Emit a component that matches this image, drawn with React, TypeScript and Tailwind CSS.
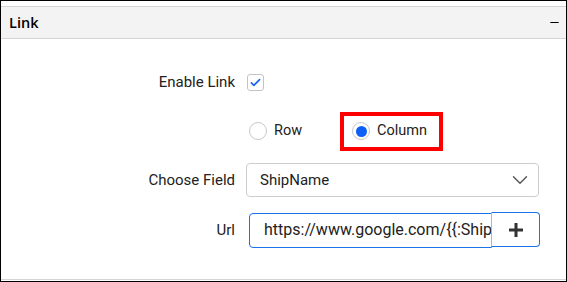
import { ChevronDown, Minus } from "lucide-react";

const Label = ({ children }: { children: string }) => (
  <div className="w-[234px] shrink-0 text-right text-[15px] text-[#222]">{children}</div>
);

const Radio = ({ label, checked }: { label: string; checked?: boolean }) => (
  <label className="flex items-center gap-[7px] text-[14.5px] text-[#222]">
    <span className="flex h-[18px] w-[18px] items-center justify-center rounded-full border border-[#c8c8c8] bg-white">
      {checked && <span className="h-[11px] w-[11px] rounded-full bg-[#0d5ff5]" />}
    </span>
    {label}
  </label>
);

export default function App() {
  return (
    <div className="flex h-[282px] w-[567px] flex-col border border-black bg-white pt-[5px] font-['Roboto',sans-serif]">
      <div className="flex flex-1 flex-col border-y border-[#d4d4d4]">
        <div className="flex h-[32px] items-center justify-between border-b border-[#d4d4d4] bg-[#f3f3f3] pl-[8px] pr-[5px]">
          <span className="font-['Open_Sans',sans-serif] text-[14.5px] font-semibold text-black">Link</span>
          <Minus className="h-[13px] w-[13px] text-black" strokeWidth={2} />
        </div>

        <div className="flex flex-col gap-[15px] pt-[26px]">
          <div className="flex h-[34px] items-center gap-[12px]">
            <Label>Enable Link</Label>
            <span className="flex h-[17px] w-[17px] items-center justify-center rounded-[3px] border border-[#c4c4c4] bg-white">
              <svg viewBox="0 0 16 16" className="h-[13px] w-[13px]" fill="none" stroke="#1662f5" strokeWidth={2} strokeLinecap="round" strokeLinejoin="round">
                <path d="M3 8.5l3 3 7-7" />
              </svg>
            </span>
          </div>

          <div className="flex h-[34px] items-center">
            <div className="w-[235px] shrink-0" />
            <div className="ml-[13px]">
              <Radio label="Row" />
            </div>
            <div className="ml-[38px] flex h-[39px] w-[103px] items-center border-4 border-[#ff0000] pl-[8px]">
              <Radio label="Column" checked />
            </div>
          </div>

          <div className="flex h-[34px] items-center gap-[11px]">
            <Label>Choose Field</Label>
            <div className="flex h-[34px] w-[293px] items-center justify-between rounded-[4px] border border-[#cdcdcd] px-[13px] text-[15px] text-[#222]">
              <span>ShipName</span>
              <ChevronDown className="-mr-[8px] h-[26px] w-[26px] text-[#555]" strokeWidth={1.3} />
            </div>
          </div>

          <div className="flex h-[36px] items-center gap-[14px]">
            <Label>Url</Label>
            <div className="flex items-center">
              <div className="flex h-[35px] w-[243px] items-center overflow-hidden whitespace-nowrap rounded-l-[4px] border border-[#1a73e8] pl-[14px] text-[16px] text-[#222]">
                https://www.google.com/{"{{"}:ShipName{"}}"}
              </div>
              <button className="-ml-[1px] -mt-[1px] flex h-[35px] w-[49px] items-center justify-center rounded-r-[4px] border border-[#1a73e8] border-l-[#b5b5b5] bg-white">
                <svg viewBox="0 0 14 14" className="h-[14px] w-[14px]" fill="#333">
                  <rect x="5.5" y="0" width="3" height="14" />
                  <rect x="0" y="5.5" width="14" height="3" />
                </svg>
              </button>
            </div>
          </div>
        </div>
      </div>
      <div className="h-[1px]" />
    </div>
  );
}
